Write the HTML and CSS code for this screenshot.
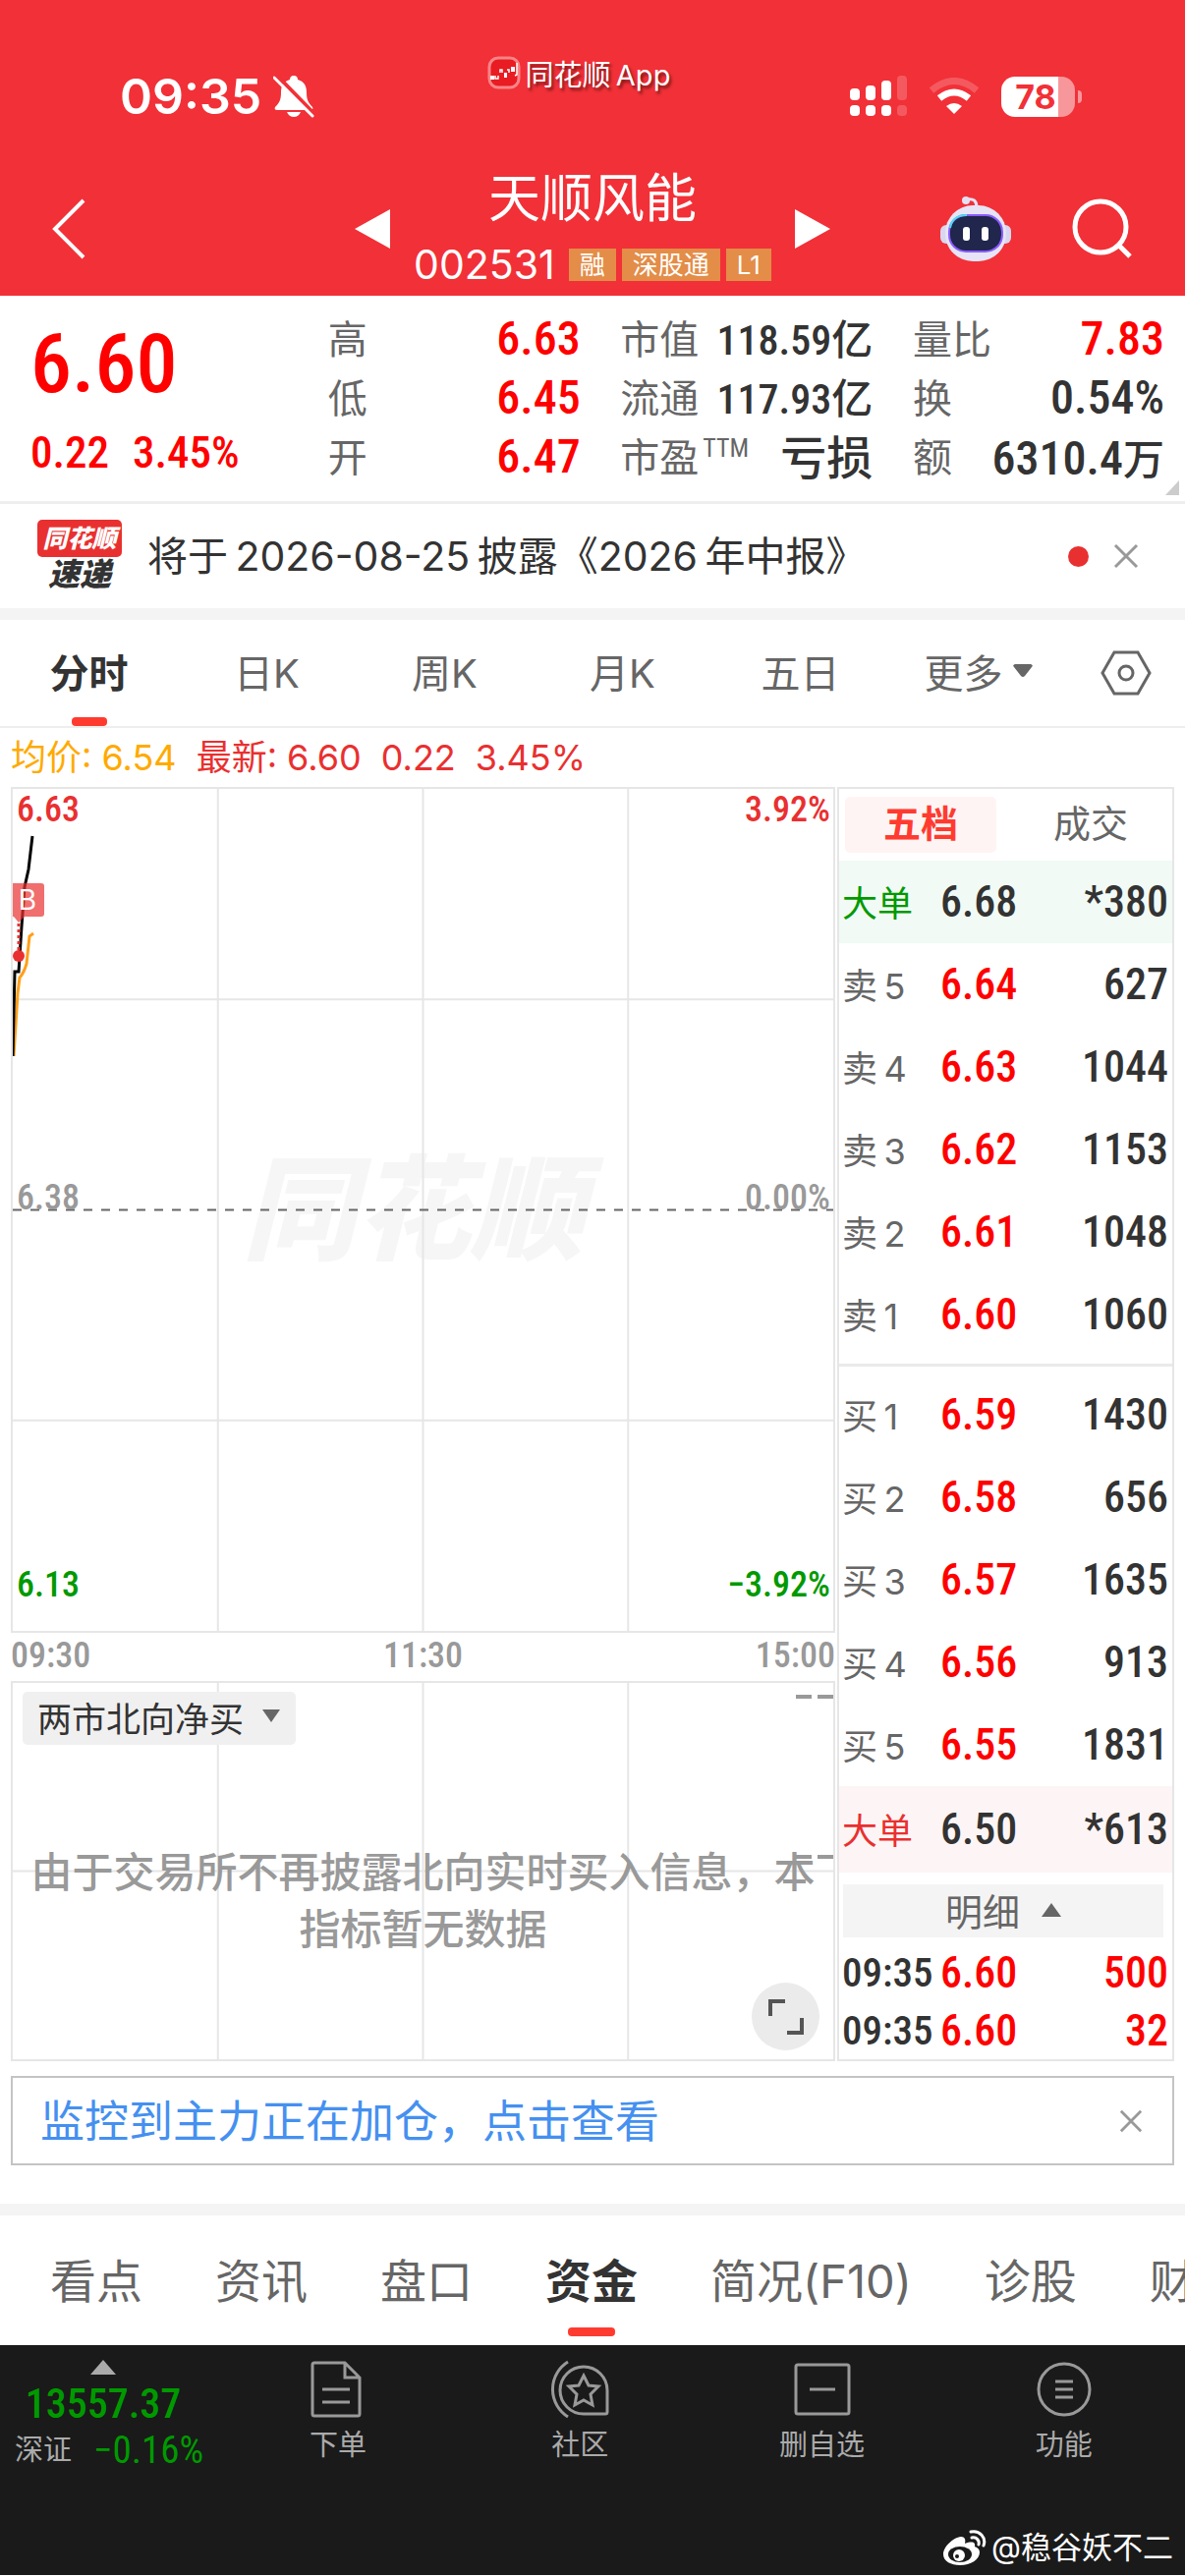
FILE: index.html
```html
<!DOCTYPE html>
<html lang="zh-CN">
<head>
    <meta charset="UTF-8">
    <meta name="viewport" content="width=device-width, initial-scale=1.0">
    <title>天顺风能 002531</title>
    <link rel="stylesheet" href="styles.css">
</head>
<body>
    <header class="header">
        <!-- 状态栏 -->
        <div class="status-bar">
            <div class="status-time">
                <span>09:35</span>
                <svg width="42" height="44" viewBox="0 0 42 44" fill="#fff">
                    <path d="M21 1c-3 0-4 2-4 4C10 7 8 12 8 18c0 8-2 11-6 15-1 2 0 3 2 3h34c2 0 3-1 2-3-4-4-6-7-6-15 0-6-2-11-9-13 0-2-1-4-4-4z"/>
                    <path d="M14 38h14c-1 3-4 5-7 5s-6-2-7-5z"/>
                    <path d="M3 0L42 40" stroke="#f23037" stroke-width="4"/>
                    <path d="M1 3L40 42" stroke="#fff" stroke-width="3" stroke-linecap="round"/>
                </svg>
            </div>
            <div class="status-app">
                <svg width="34" height="34" viewBox="0 0 34 34" fill="none">
                    <rect x="2" y="2" width="30" height="30" rx="9" fill="#e81c22" stroke="#f98488" stroke-width="3"/>
                    <path d="M3 20h4v4h-4zM17 17h3v5h-3zM24 11h4v5h-4z" fill="#fff"/>
                    <path d="M8 20v3h3v-3M13 17v-3h2v3M22 17v-3h-2M30 7v12l-2 1" stroke="#fff" stroke-width="1.5"/>
                </svg>
                <span>同花顺&thinsp;App</span>
            </div>
            <div class="status-icons">
                <svg width="58" height="42" viewBox="0 0 58 42" fill="#fff">
                    <rect x="0" y="13" width="10" height="12" rx="4"/>
                    <rect x="16" y="10" width="10" height="15" rx="4"/>
                    <rect x="32" y="5" width="10" height="20" rx="4"/>
                    <rect x="48" y="0" width="10" height="25" rx="4" opacity=".2"/>
                    <rect x="0" y="30" width="10" height="11" rx="4"/>
                    <rect x="16" y="30" width="10" height="11" rx="4"/>
                    <rect x="32" y="30" width="10" height="11" rx="4"/>
                    <rect x="48" y="30" width="10" height="11" rx="4" opacity=".2"/>
                </svg>
                <svg width="52" height="38" viewBox="0 0 52 38" fill="none" stroke="#fff" stroke-width="7">
                    <path d="M3 13Q26-6 49 13" opacity=".2"/>
                    <path d="M11 21Q26 9 41 21"/>
                    <path d="M26 37l-8-8q8-6 16 0z" fill="#fff" stroke="none"/>
                </svg>
                <div class="battery"><span class="battery-level">78</span></div>
            </div>
        </div>

        <!-- 导航 -->
        <nav class="nav">
            <button type="button" class="icon-btn nav-back" aria-label="返回">
                <svg width="34" height="62" viewBox="0 0 34 62" fill="none" stroke="#fff" stroke-width="4">
                    <path d="M32 2L3 31l29 29"/>
                </svg>
            </button>
            <div class="nav-stock">
                <button type="button" class="icon-btn" aria-label="上一只">
                    <svg width="36" height="40" viewBox="0 0 36 40" fill="#fff"><path d="M0 20L36 0v40z"/></svg>
                </button>
                <div class="stock-title">
                    <h1>天顺风能</h1>
                    <div class="stock-code">
                        <span class="code">002531</span>
                        <span class="tag">融</span>
                        <span class="tag">深股通</span>
                        <span class="tag">L1</span>
                    </div>
                </div>
                <button type="button" class="icon-btn" aria-label="下一只">
                    <svg width="36" height="40" viewBox="0 0 36 40" fill="#fff"><path d="M36 20L0 0v40z"/></svg>
                </button>
            </div>
            <div class="nav-actions">
                <button type="button" class="icon-btn" aria-label="助手">
                    <svg width="72" height="68" viewBox="0 0 72 68">
                        <path d="M27 4q10-2 10 8" fill="none" stroke="#e4e0f4" stroke-width="3"/>
                        <circle cx="26" cy="5" r="4" fill="#e4e0f4"/>
                        <rect x="0" y="30" width="72" height="19" rx="6" fill="#d8d6f0"/>
                        <rect x="5" y="10" width="62" height="57" rx="28" fill="#e6e4f6"/>
                        <rect x="9" y="20" width="54" height="37" rx="17" fill="#20264c" stroke="#8a5cff" stroke-width="2"/>
                        <path d="M10 33q2-13 17-13" fill="none" stroke="#4fd8ee" stroke-width="2"/>
                        <rect x="23" y="32" width="7" height="14" rx="3" fill="#fff"/>
                        <rect x="42" y="32" width="7" height="14" rx="3" fill="#fff"/>
                    </svg>
                </button>
                <button type="button" class="icon-btn" aria-label="搜索">
                    <svg width="62" height="62" viewBox="0 0 62 62" fill="none" stroke="#fff">
                        <circle cx="29" cy="29" r="26" stroke-width="5"/>
                        <path d="M47 47l12 12" stroke-width="5"/>
                    </svg>
                </button>
            </div>
        </nav>
    </header>

    <!-- 行情数据 -->
    <section class="quote">
        <div class="quote-price">
            <strong class="price">6.60</strong>
            <div class="change"><span>0.22</span><span>3.45%</span></div>
        </div>
        <dl class="quote-list">
            <div><dt>高</dt><dd class="up">6.63</dd></div>
            <div><dt>低</dt><dd class="up">6.45</dd></div>
            <div><dt>开</dt><dd class="up">6.47</dd></div>
        </dl>
        <dl class="quote-list">
            <div><dt>市值</dt><dd class="mid">118.59<i>亿</i></dd></div>
            <div><dt>流通</dt><dd class="mid">117.93<i>亿</i></dd></div>
            <div><dt>市盈<sup>TTM</sup></dt><dd class="loss">亏损</dd></div>
        </dl>
        <dl class="quote-list">
            <div><dt>量比</dt><dd class="up">7.83</dd></div>
            <div><dt>换</dt><dd>0.54%</dd></div>
            <div><dt>额</dt><dd>6310.4<i>万</i></dd></div>
        </dl>
        <span class="corner"></span>
    </section>

    <!-- 公告 -->
    <section class="notice">
        <div class="notice-logo">
            <span class="logo-top">同花顺</span>
            <span class="logo-bottom">速递</span>
        </div>
        <a href="#notice" class="notice-text">将于&thinsp;2026-08-25&thinsp;披露《2026&thinsp;年中报》</a>
        <span class="dot"></span>
        <button type="button" class="icon-btn" aria-label="关闭">
            <svg width="26" height="26" viewBox="0 0 26 26" stroke="#999" stroke-width="3"><path d="M2 2l22 22M24 2L2 24"/></svg>
        </button>
    </section>

    <!-- 周期切换 -->
    <nav class="period-tabs">
        <button type="button" class="tab active">分时</button>
        <button type="button" class="tab">日K</button>
        <button type="button" class="tab">周K</button>
        <button type="button" class="tab">月K</button>
        <button type="button" class="tab">五日</button>
        <button type="button" class="tab">更多<svg width="20" height="14" viewBox="0 0 20 14" fill="#666"><path d="M2 0h16q3 1 1 3l-7 9q-2 2-4 0L1 3Q-1 1 2 0z"/></svg></button>
        <button type="button" class="icon-btn period-setting" aria-label="设置">
            <svg width="52" height="46" viewBox="0 0 52 46" fill="none" stroke="#666" stroke-width="3">
                <path d="M14 2h24l12 21-12 21H14L2 23z"/>
                <circle cx="26" cy="23" r="7"/>
            </svg>
        </button>
    </nav>

    <p class="minute-info">
        <span class="avg">均价: 6.54</span>
        <span>最新: 6.60</span>
        <span>0.22</span>
        <span>3.45%</span>
    </p>

    <main class="board">
        <div class="charts">
            <!-- 分时图 -->
            <div class="chart minute-chart">
                <span class="watermark">同花顺</span>
                <svg class="chart-grid" width="100%" height="100%" stroke="#e6e6e6" stroke-width="2">
                    <line x1="25%" y1="0" x2="25%" y2="100%"/>
                    <line x1="50%" y1="0" x2="50%" y2="100%"/>
                    <line x1="75%" y1="0" x2="75%" y2="100%"/>
                    <line x1="0" y1="25%" x2="100%" y2="25%"/>
                    <line x1="0" y1="75%" x2="100%" y2="75%"/>
                    <line x1="0" y1="50%" x2="100%" y2="50%" stroke="#666" stroke-dasharray="9 9"/>
                </svg>
                <svg class="chart-line" width="60" height="300" viewBox="0 0 60 300" fill="none">
                    <path d="M1 272L5 208 7 192q4-4 7-14l3-28 4-3" stroke="#ff9f1a" stroke-width="3"/>
                    <path d="M0 272L2 186h4L9 140 12 100 16 82 20 48" stroke="#000" stroke-width="3"/>
                    <rect x="-3" y="96" width="35" height="34" rx="3" fill="#e93030" fill-opacity=".7"/>
                    <path d="M1 130h11l-6 6z" fill="#e93030" fill-opacity=".7"/>
                    <path d="M6 137v28" stroke="#e93030" stroke-width="3" stroke-dasharray="3 3"/>
                    <circle cx="6" cy="170" r="6" fill="#e93030"/>
                    <text x="15" y="123" fill="#fff" font-size="28" text-anchor="middle">B</text>
                </svg>
                <div class="axis-row up-text"><span>6.63</span><span>3.92%</span></div>
                <div class="axis-row mid-text"><span>6.38</span><span>0.00%</span></div>
                <div class="axis-row down-text"><span>6.13</span><span>−3.92%</span></div>
            </div>
            <div class="time-axis"><span>09:30</span><span>11:30</span><span>15:00</span></div>
            <!-- 指标副图 -->
            <div class="chart sub-chart">
                <svg class="chart-grid" width="100%" height="100%" stroke="#e6e6e6" stroke-width="2">
                    <line x1="25%" y1="0" x2="25%" y2="100%"/>
                    <line x1="50%" y1="0" x2="50%" y2="100%"/>
                    <line x1="75%" y1="0" x2="75%" y2="100%"/>
                    <line x1="0" y1="50%" x2="100%" y2="50%"/>
                </svg>
                <div class="sub-head">
                    <button type="button" class="indicator">两市北向净买<svg width="20" height="14" viewBox="0 0 20 14" fill="#666"><path d="M1 0h18l-9 13z"/></svg></button>
                    <span class="dashes"></span>
                </div>
                <p class="empty">由于交易所不再披露北向实时买入信息，本指标暂无数据</p>
                <span class="dashes dashes-mid"></span>
                <button type="button" class="fullscreen" aria-label="全屏">
                    <svg width="38" height="38" viewBox="0 0 38 38" fill="none" stroke="#555" stroke-width="4">
                        <path d="M3 18V3h15M35 20v15H20"/>
                    </svg>
                </button>
            </div>
        </div>

        <!-- 五档盘口 -->
        <aside class="book">
            <div class="book-tabs">
                <button type="button" class="active">五档</button>
                <button type="button">成交</button>
            </div>
            <table class="book-table">
                <tbody>
                    <tr class="big-sell"><th>大单</th><td>6.68</td><td>*380</td></tr>
                    <tr><th>卖&thinsp;5</th><td>6.64</td><td>627</td></tr>
                    <tr><th>卖&thinsp;4</th><td>6.63</td><td>1044</td></tr>
                    <tr><th>卖&thinsp;3</th><td>6.62</td><td>1153</td></tr>
                    <tr><th>卖&thinsp;2</th><td>6.61</td><td>1048</td></tr>
                    <tr><th>卖&thinsp;1</th><td>6.60</td><td>1060</td></tr>
                </tbody>
            </table>
            <table class="book-table book-buy">
                <tbody>
                    <tr><th>买&thinsp;1</th><td>6.59</td><td>1430</td></tr>
                    <tr><th>买&thinsp;2</th><td>6.58</td><td>656</td></tr>
                    <tr><th>买&thinsp;3</th><td>6.57</td><td>1635</td></tr>
                    <tr><th>买&thinsp;4</th><td>6.56</td><td>913</td></tr>
                    <tr><th>买&thinsp;5</th><td>6.55</td><td>1831</td></tr>
                    <tr class="big-buy"><th>大单</th><td>6.50</td><td>*613</td></tr>
                </tbody>
            </table>
            <button type="button" class="detail-btn">明细<svg width="20" height="14" viewBox="0 0 20 14" fill="#666"><path d="M10 0l10 14H0z"/></svg></button>
            <table class="book-table deals">
                <tbody>
                    <tr><th>09:35</th><td>6.60</td><td>500</td></tr>
                    <tr><th>09:35</th><td>6.60</td><td>32</td></tr>
                </tbody>
            </table>
        </aside>
    </main>

    <div class="monitor">
        <a href="#monitor">监控到主力正在加仓，点击查看</a>
        <button type="button" class="icon-btn" aria-label="关闭">
            <svg width="24" height="24" viewBox="0 0 26 26" stroke="#999" stroke-width="3"><path d="M2 2l22 22M24 2L2 24"/></svg>
        </button>
    </div>

    <nav class="info-tabs">
        <button type="button" class="tab">看点</button>
        <button type="button" class="tab">资讯</button>
        <button type="button" class="tab">盘口</button>
        <button type="button" class="tab active">资金</button>
        <button type="button" class="tab">简况(F10)</button>
        <button type="button" class="tab">诊股</button>
        <button type="button" class="tab">财务</button>
    </nav>

    <footer class="bottom">
        <div class="bottom-bar">
            <div class="index">
                <svg width="26" height="15" viewBox="0 0 26 15" fill="#aaa"><path d="M13 0l13 15H0z"/></svg>
                <strong>13557.37</strong>
                <div class="index-change"><span>深证</span><em>−0.16%</em></div>
            </div>
            <a href="#order" class="bottom-item">
                <svg width="60" height="60" viewBox="0 0 60 60" fill="none" stroke="#999" stroke-width="3">
                    <path d="M37 3H6q-2 0-2 2v50q0 2 2 2h44q2 0 2-2V18zM37 3v15h15M14 30h28M14 43h28"/>
                </svg>
                <span>下单</span>
            </a>
            <a href="#community" class="bottom-item">
                <svg width="60" height="60" viewBox="0 0 60 60" fill="none" stroke="#999" stroke-width="3">
                    <path d="M18 2a33 33 0 0 0 0 56"/>
                    <path d="M58 53V31a24 24 0 1 0-24 24h22q2 0 2-2z"/>
                    <path d="M34 16l5 10 10 1-8 8 2 11-9-5-9 5 2-11-8-8 10-1z"/>
                </svg>
                <span>社区</span>
            </a>
            <a href="#remove" class="bottom-item">
                <svg width="60" height="60" viewBox="0 0 60 60" fill="none" stroke="#999" stroke-width="3">
                    <rect x="3" y="5" width="54" height="50" rx="2"/>
                    <path d="M17 30h26"/>
                </svg>
                <span>删自选</span>
            </a>
            <a href="#more" class="bottom-item">
                <svg width="60" height="60" viewBox="0 0 60 60" fill="none" stroke="#999" stroke-width="3">
                    <circle cx="30" cy="30" r="26"/>
                    <path d="M21 22h18M21 30h18M21 38h18"/>
                </svg>
                <span>功能</span>
            </a>
        </div>
        <div class="author">
            <svg width="44" height="36" viewBox="0 0 44 36">
                <path d="M18 7C10 8 0 17 0 25c0 7 8 11 17 11 11 0 20-6 20-13 0-4-3-5-5-6 1-4-2-6-10-3 1-4 0-7-4-7z" fill="#fff"/>
                <ellipse cx="17" cy="25" rx="12" ry="8" fill="#1a1a1a"/>
                <circle cx="16" cy="26" r="6" fill="#fff"/>
                <circle cx="14" cy="27" r="2" fill="#1a1a1a"/>
                <path d="M28 2c9-2 16 6 13 14M29 8c5-1 8 3 7 7" fill="none" stroke="#fff" stroke-width="3" stroke-linecap="round"/>
            </svg>
            <span>@稳谷妖不二</span>
        </div>
    </footer>
</body>
</html>
```
FILE: styles.css
```css
* {
    box-sizing: border-box;
}
body {
    margin: 0;
    background: #fff;
    color: #333;
    font-family: Inter, "Noto Sans CJK SC", sans-serif;
    overflow-x: hidden;
}
button {
    font: inherit;
    color: inherit;
    background: none;
    border: none;
    padding: 0;
    cursor: pointer;
}
a {
    color: inherit;
    text-decoration: none;
}
svg {
    display: block;
    flex: none;
}
h1, p, dl, dd {
    margin: 0;
}
i, em {
    font-style: normal;
}

/* 顶部 */
.header {
    background: #f23037;
    color: #fff;
    height: 301px;
}
.status-bar {
    display: grid;
    grid-template-columns: 1fr auto 1fr;
    height: 160px;
    padding: 0 112px 0 122px;
}
.status-time {
    display: flex;
    align-items: center;
    gap: 12px;
    height: 196px;
    font-size: 50px;
    font-weight: 600;
}
.status-app {
    display: flex;
    align-items: center;
    gap: 5px;
    height: 148px;
    margin-right: 38px;
    font-size: 29px;
    text-shadow: 2px 3px 3px rgba(0, 0, 0, 0.5);
}
.status-icons {
    display: flex;
    align-items: center;
    justify-content: flex-end;
    gap: 22px;
    height: 196px;
}
.battery {
    position: relative;
    width: 75px;
    height: 41px;
    border-radius: 14px;
    background: linear-gradient(90deg, #fff 78%, #f8979b 78%);
}
.battery::after {
    content: "";
    position: absolute;
    left: 78px;
    top: 14px;
    width: 4px;
    height: 13px;
    border-radius: 0 4px 4px 0;
    background: #f8979b;
}
.battery-level {
    display: block;
    width: 70px;
    line-height: 41px;
    text-align: center;
    color: #f23037;
    font-size: 34px;
    font-weight: 700;
}
.nav {
    display: grid;
    grid-template-columns: 1fr auto 1fr;
    align-items: center;
    height: 141px;
    padding: 5px 53px 0;
}
.nav-back {
    justify-self: start;
}
.nav-stock {
    display: flex;
    align-items: center;
    gap: 20px;
}
.stock-title {
    display: flex;
    flex-direction: column;
    align-items: center;
    width: 372px;
}
.stock-title h1 {
    font-size: 53px;
    font-weight: 400;
    line-height: 72px;
}
.stock-code {
    display: flex;
    align-items: center;
    gap: 6px;
    line-height: 62px;
}
.code {
    font-size: 41px;
    margin-right: 8px;
}
.tag {
    padding: 0 11px;
    background: #e38d48;
    font-size: 26px;
    line-height: 33px;
}
.nav-actions {
    display: flex;
    align-items: center;
    justify-content: flex-end;
    gap: 62px;
}

/* 行情数据 */
.quote {
    position: relative;
    display: grid;
    grid-template-columns: 262px 257px 257px 256px;
    column-gap: 40px;
    justify-content: space-between;
    height: 212px;
    padding: 13px 21px 0 31px;
    border-bottom: 3px solid #eee;
    font-family: "Roboto Condensed", Roboto, "Noto Sans CJK SC", sans-serif;
}
.quote-price {
    color: #f00;
}
.price {
    display: block;
    font-size: 84px;
    font-weight: 500;
    line-height: 114px;
}
.change {
    display: flex;
    gap: 24px;
    font-size: 45px;
    font-weight: 500;
    line-height: 66px;
}
.quote-list div {
    display: flex;
    align-items: center;
    justify-content: space-between;
    height: 60px;
}
.quote-list dt {
    padding-bottom: 3px;
    color: #666;
    font-size: 40px;
}
.quote-list sup {
    font-size: 26px;
    margin-left: 4px;
}
.quote-list dd {
    font-size: 48px;
    font-weight: 500;
    white-space: nowrap;
}
.quote-list .mid {
    padding-bottom: 3px;
    font-size: 42px;
}
.quote-list .loss {
    padding-bottom: 4px;
    font-size: 47px;
}
.quote-list i {
    font-size: 42px;
}
.up {
    color: #f00;
}
.corner {
    position: absolute;
    right: 6px;
    bottom: 6px;
    border-left: 14px solid transparent;
    border-bottom: 15px solid #ccc;
}

/* 公告 */
.notice {
    display: flex;
    align-items: center;
    gap: 25px;
    height: 118px;
    padding: 0 47px 0 37px;
    border-bottom: 12px solid #f4f4f4;
}
.notice-logo {
    display: flex;
    flex-direction: column;
    align-items: center;
    width: 88px;
    font-style: italic;
    font-weight: 900;
}
.logo-top {
    width: 86px;
    background: #e93030;
    border-radius: 5px;
    color: #fff;
    font-size: 25px;
    line-height: 38px;
    text-align: center;
}
.logo-bottom {
    font-size: 32px;
    line-height: 36px;
}
.notice-text {
    flex: 1;
    padding-bottom: 7px;
    font-size: 41px;
}
.dot {
    width: 21px;
    height: 21px;
    border-radius: 50%;
    background: #e93030;
}

/* 周期切换 */
.period-tabs {
    display: flex;
    height: 110px;
    border-bottom: 2px solid #eee;
    color: #666;
    font-size: 40px;
}
.period-tabs .tab {
    flex: 1;
}
.tab {
    position: relative;
    display: flex;
    align-items: center;
    justify-content: center;
    gap: 10px;
    padding-bottom: 4px;
    white-space: nowrap;
}
.tab.active {
    color: #333;
    font-weight: 700;
}
.tab.active::after {
    content: "";
    position: absolute;
    left: 50%;
    bottom: 0;
    width: 36px;
    height: 9px;
    margin-left: -18px;
    border-radius: 4px;
    background: #ff3b30;
}
.period-setting {
    flex: 0 0 120px;
    padding-left: 34px;
}

/* 分时 */
.minute-info {
    display: flex;
    gap: 20px;
    padding-left: 11px;
    color: #e93030;
    font-size: 36px;
    line-height: 60px;
}
.minute-info .avg {
    color: #ffaa00;
}
.board {
    display: grid;
    grid-template-columns: 839fr 343fr;
    gap: 2px;
    padding: 0 11px;
}
.chart {
    position: relative;
    border: 2px solid #e6e6e6;
}
.chart-grid, .chart-line {
    position: absolute;
    left: 0;
    top: 0;
}
.minute-chart {
    display: flex;
    flex-direction: column;
    justify-content: space-between;
    height: 861px;
    padding: 0 3px 0 4px;
    overflow: hidden;
}
.watermark {
    position: absolute;
    inset: 0;
    padding-right: 20px;
    line-height: 857px;
    text-align: center;
    color: #f6f6f6;
    font-size: 116px;
    font-weight: 900;
    font-style: italic;
}
.axis-row {
    position: relative;
    display: flex;
    justify-content: space-between;
    font-family: "Roboto Condensed", Roboto, sans-serif;
    font-size: 36px;
    font-weight: 500;
    line-height: 42px;
}
.up-text {
    color: #e93030;
}
.mid-text {
    color: #999;
}
.down-text {
    color: #090;
    padding-bottom: 26px;
}
.time-axis {
    display: flex;
    justify-content: space-between;
    color: #999;
    font-family: "Roboto Condensed", Roboto, sans-serif;
    font-size: 36px;
    font-weight: 500;
    line-height: 47px;
    padding-bottom: 2px;
}
.sub-chart {
    height: 387px;
}
.sub-head {
    position: relative;
    display: flex;
    align-items: flex-start;
    justify-content: space-between;
    padding: 9px 0 0 10px;
}
.indicator {
    display: flex;
    align-items: center;
    gap: 18px;
    height: 54px;
    padding: 0 15px 4px;
    border-radius: 5px;
    background: #f0f0f0;
    font-size: 35px;
}
.dashes {
    width: 38px;
    height: 4px;
    margin-top: 3px;
    background: linear-gradient(90deg, #999 16px, transparent 16px, transparent 22px, #999 22px);
}
.dashes-mid {
    position: absolute;
    right: 0;
    top: 172px;
}
.empty {
    position: relative;
    padding: 101px 16px 0;
    color: #999;
    font-size: 42px;
    font-weight: 500;
    line-height: 58px;
    text-align: center;
}
.fullscreen {
    position: absolute;
    right: 14px;
    bottom: 9px;
    display: flex;
    align-items: center;
    justify-content: center;
    width: 69px;
    height: 69px;
    border-radius: 50%;
    background: #ebebeb;
}

/* 五档盘口 */
.book {
    border: 2px solid #e6e6e6;
}
.book-tabs {
    display: grid;
    grid-template-columns: 1fr 1fr;
    height: 73px;
    padding: 8px 6px;
    color: #666;
    font-size: 38px;
    line-height: 54px;
}
.book-tabs button {
    width: 154px;
    padding-bottom: 3px;
}
.book-tabs button + button {
    justify-self: end;
}
.book-tabs .active {
    border-radius: 5px;
    background: #fff4f4;
    color: #ff3b30;
    font-weight: 700;
}
.book-table {
    width: 100%;
    border-spacing: 0;
    table-layout: fixed;
    font-family: "Roboto Condensed", Roboto, "Noto Sans CJK SC", sans-serif;
    font-size: 44px;
    font-weight: 500;
}
.book-table tr {
    height: 84px;
}
.book-table th, .book-table td {
    padding: 0;
    white-space: nowrap;
}
.book-table th {
    width: 103px;
    padding-left: 3px;
    padding-bottom: 3px;
    color: #666;
    font-family: Inter, "Noto Sans CJK SC", sans-serif;
    font-size: 36px;
    font-weight: 400;
    text-align: left;
}
.book-table td {
    color: #f00;
}
.book-table td:last-child {
    padding-right: 4px;
    color: #333;
    text-align: right;
}
.book-table .big-sell {
    background: #f1faf5;
}
.book-table .big-buy {
    height: 88px;
    background: #fdf5f5;
}
.big-sell th {
    color: #090;
}
.big-buy th {
    color: #e93030;
}
.big-sell td, .big-buy td {
    color: #333;
}
.book-buy {
    margin-top: 8px;
    padding-top: 7px;
    border-top: 3px solid #eaeaea;
}
.detail-btn {
    display: flex;
    align-items: center;
    justify-content: center;
    gap: 22px;
    width: calc(100% - 13px);
    height: 54px;
    margin: 12px 4px 6px;
    padding-bottom: 3px;
    background: #f4f4f4;
    color: #666;
    font-size: 38px;
}
.book-table.deals tr {
    height: 59px;
}
.book-table.deals th {
    padding-bottom: 0;
    color: #333;
    font-family: inherit;
    font-size: 41px;
    font-weight: 500;
}
.book-table.deals td:last-child {
    color: #f00;
}

/* 主力监控 */
.monitor {
    display: flex;
    align-items: center;
    justify-content: space-between;
    height: 91px;
    margin: 15px 11px 39px;
    padding: 0 30px 0 28px;
    border: 2px solid #c4c4c4;
    color: #4590f0;
    font-size: 45px;
}
.monitor a {
    padding-bottom: 4px;
}
.info-tabs {
    display: flex;
    gap: 74px;
    height: 144px;
    padding-left: 51px;
    border-top: 12px solid #f4f4f4;
    color: #666;
    font-size: 47px;
    overflow: hidden;
}
.info-tabs .tab {
    padding-bottom: 6px;
}
.info-tabs .tab.active::after {
    bottom: 9px;
    width: 48px;
    margin-left: -24px;
}

/* 底部 */
.bottom {
    background: #1a1a1a;
    height: 234px;
}
.bottom-bar {
    display: grid;
    grid-template-columns: 221px repeat(4, 1fr);
    height: 184px;
    color: #aaa;
    font-size: 29px;
}
.index {
    display: flex;
    flex-direction: column;
    align-items: center;
    padding: 15px 11px 0 0;
    font-family: "Roboto Condensed", Roboto, "Noto Sans CJK SC", sans-serif;
}
.index strong {
    color: #090;
    font-size: 42px;
    font-weight: 500;
    line-height: 60px;
}
.index-change {
    display: flex;
    align-items: center;
    gap: 22px;
    padding-left: 12px;
    line-height: 34px;
}
.index-change em {
    color: #090;
    font-size: 39px;
}
.bottom-item {
    display: flex;
    flex-direction: column;
    align-items: center;
    padding-top: 15px;
    line-height: 54px;
}
.author {
    display: flex;
    align-items: center;
    justify-content: flex-end;
    gap: 5px;
    padding-right: 12px;
    color: #fff;
    font-size: 31px;
    line-height: 44px;
}
```
